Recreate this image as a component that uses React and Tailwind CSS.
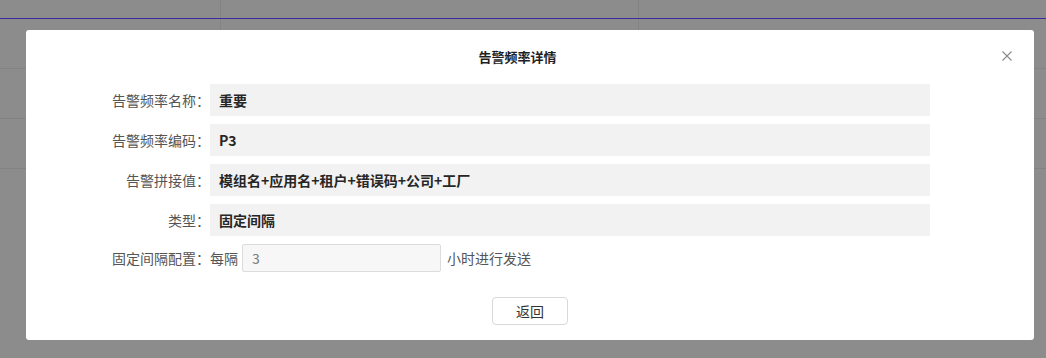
import React from "react";

const font = { fontFamily: '"Noto Sans CJK SC", "Noto Sans", sans-serif' };

function BgRow({ h, border }) {
  return (
    <div className={`flex w-full ${h} border-b ${border}`}>
      <div className="w-[221px] h-full border-r border-[#838383]" />
      <div className="w-[418px] h-full border-r border-[#838383]" />
      <div className="flex-1 h-full" />
    </div>
  );
}

function Row({ label, value }) {
  return (
    <div className="flex items-center">
      <div className="w-[184px] shrink-0 text-right text-[14px] text-[#555]">{label}</div>
      <div className="w-[720px] h-8 bg-[#f2f2f2] flex items-center pl-[9px] text-[14px] font-bold text-[#262626]">
        {value}
      </div>
    </div>
  );
}

export default function App() {
  return (
    <div className="relative w-full h-[358px] bg-[#8c8c8c] overflow-hidden" style={font}>
      <div className="flex flex-col">
        <BgRow h="h-[19px]" border="border-[#3a2c9c]" />
        <BgRow h="h-[50px]" border="border-[#838383]" />
        <BgRow h="h-[50px]" border="border-[#838383]" />
        <BgRow h="h-[50px]" border="border-[#838383]" />
      </div>

      <div className="absolute left-[26px] top-[30px] w-[1008px] h-[310px] bg-white rounded-[3px] flex flex-col">
        <div className="relative h-[54px] flex items-center justify-center pr-[25px]">
          <span className="text-[13px] font-bold text-[#1f1f1f]">告警频率详情</span>
          <svg
            className="absolute right-[22px] top-[21px]"
            width="10"
            height="10"
            viewBox="0 0 10 10"
          >
            <path d="M0.5 0.5 L9.5 9.5 M9.5 0.5 L0.5 9.5" stroke="#8a8a8a" strokeWidth="1.1" />
          </svg>
        </div>
        <div className="flex flex-col gap-2">
          <Row label="告警频率名称：" value="重要" />
          <Row label="告警频率编码：" value="P3" />
          <Row label="告警拼接值：" value="模组名+应用名+租户+错误码+公司+工厂" />
          <Row label="类型：" value="固定间隔" />
          <div className="flex items-center text-[14px] text-[#555]">
            <div className="w-[184px] shrink-0 text-right">固定间隔配置：</div>
            <span>每隔</span>
            <div className="ml-[4px] w-[199px] h-[28px] border border-[#dcdcdc] bg-[#f7f7f7] rounded-[2px] flex items-center pl-[9px] text-[#777]">
              3
            </div>
            <span className="ml-[6px]">小时进行发送</span>
          </div>
        </div>
        <div className="flex justify-center mt-[25px]">
          <button className="w-[76px] h-[28px] border border-[#d9d9d9] rounded-[4px] bg-white text-[14px] text-[#333]">
            返回
          </button>
        </div>
      </div>
    </div>
  );
}
